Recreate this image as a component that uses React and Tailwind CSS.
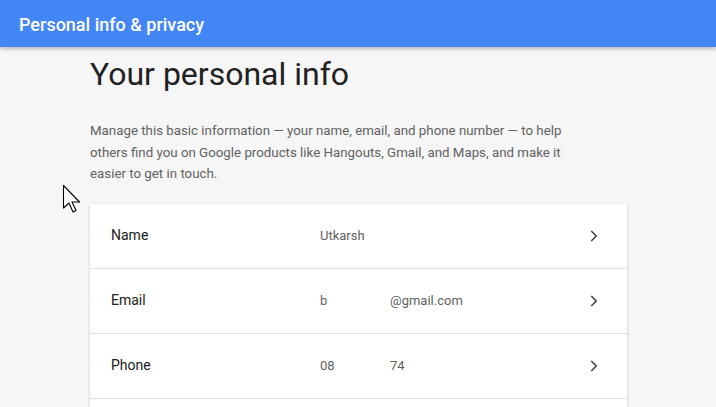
import React from 'react'
import { ChevronRight } from 'lucide-react'

const rows = [
  { label: 'Name', value: ['Utkarsh'] },
  { label: 'Email', value: ['b', '@gmail.com'] },
  { label: 'Phone', value: ['08', '74'] },
  { label: '', value: [] },
]

const Cursor = () => (
  <svg className="absolute left-[62px] top-[184px]" width="20" height="30" viewBox="0 0 20 30">
    <path d="M1.5 1.5 L1.5 24 L7 19 L11 28 L14 26.5 L10 18 L17.5 18 Z" fill="#fff" stroke="#000" strokeWidth="1.1" strokeLinejoin="round" />
  </svg>
)

const App = () => {
  return (
    <div className="relative h-[407px] w-[716px] overflow-hidden bg-[#f6f6f6] font-['Roboto',sans-serif]">
      <header className="relative z-10 flex h-[47px] items-center bg-[#4285f4] px-[19px] shadow-[0_2px_4px_rgba(0,0,0,0.25)]">
        <h1 className="pt-[1px] text-[18px] font-medium text-white">Personal info &amp; privacy</h1>
      </header>

      <main className="pl-[90px] pr-[89px]">
        <h2 className="mt-[5px] text-[32px] leading-[44px] text-[#212121]">Your personal info</h2>
        <p className="mt-[24px] w-[500px] text-[13.3px] leading-[21.5px] text-[#616161]">
          Manage this basic information — your name, email, and phone number — to help others find you on Google products like Hangouts, Gmail, and Maps, and make it easier to get in touch.
        </p>

        <div className="mt-[19px] bg-white shadow-[0_1px_3px_rgba(0,0,0,0.2)]">
          {rows.map((row, idx) => (
            <div key={idx} className="flex h-[65px] items-center border-b border-[#e0e0e0] pl-[21px] pr-[24px]">
              <div className="w-[209px] text-[14px] text-[#212121]">{row.label}</div>
              <div className="flex flex-1 text-[13px] text-[#616161]">
                {row.value.map((v, i) => (
                  <span key={i} className={i === 0 && row.value.length > 1 ? 'w-[70px]' : ''}>{v}</span>
                ))}
              </div>
              {row.label && <ChevronRight className="h-[18px] w-[18px] text-[#444]" strokeWidth={2.2} />}
            </div>
          ))}
        </div>
      </main>

      <Cursor />
    </div>
  )
}

export default App
